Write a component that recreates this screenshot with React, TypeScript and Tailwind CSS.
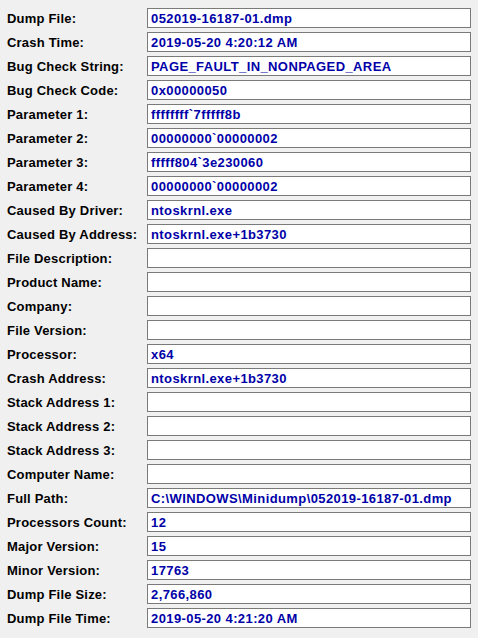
import React from "react";

const rows: [string, string][] = [
  ["Dump File:", "052019-16187-01.dmp"],
  ["Crash Time:", "2019-05-20 4:20:12 AM"],
  ["Bug Check String:", "PAGE_FAULT_IN_NONPAGED_AREA"],
  ["Bug Check Code:", "0x00000050"],
  ["Parameter 1:", "ffffffff`7fffff8b"],
  ["Parameter 2:", "00000000`00000002"],
  ["Parameter 3:", "fffff804`3e230060"],
  ["Parameter 4:", "00000000`00000002"],
  ["Caused By Driver:", "ntoskrnl.exe"],
  ["Caused By Address:", "ntoskrnl.exe+1b3730"],
  ["File Description:", ""],
  ["Product Name:", ""],
  ["Company:", ""],
  ["File Version:", ""],
  ["Processor:", "x64"],
  ["Crash Address:", "ntoskrnl.exe+1b3730"],
  ["Stack Address 1:", ""],
  ["Stack Address 2:", ""],
  ["Stack Address 3:", ""],
  ["Computer Name:", ""],
  ["Full Path:", "C:\\WINDOWS\\Minidump\\052019-16187-01.dmp"],
  ["Processors Count:", "12"],
  ["Major Version:", "15"],
  ["Minor Version:", "17763"],
  ["Dump File Size:", "2,766,860"],
  ["Dump File Time:", "2019-05-20 4:21:20 AM"],
];

export default function App() {
  return (
    <div
      className="h-[638px] w-[478px] bg-[#f0f0f0] pt-[8px] font-bold text-[13px]"
      style={{ fontFamily: '"Liberation Sans", Arial, sans-serif' }}
    >
      <div className="flex flex-col gap-[4px]">
        {rows.map(([label, value]) => (
          <div key={label} className="flex h-[20px] items-center">
            <div className="w-[147px] pl-[7px] text-black leading-none tracking-[0.2px]">{label}</div>
            <div className="flex h-[20px] w-[324px] items-center border border-[#7a7a7a] bg-white pl-[3px] text-[#0000a8] leading-none whitespace-nowrap overflow-hidden tracking-[0.4px]">
              {value}
            </div>
          </div>
        ))}
      </div>
    </div>
  );
}
